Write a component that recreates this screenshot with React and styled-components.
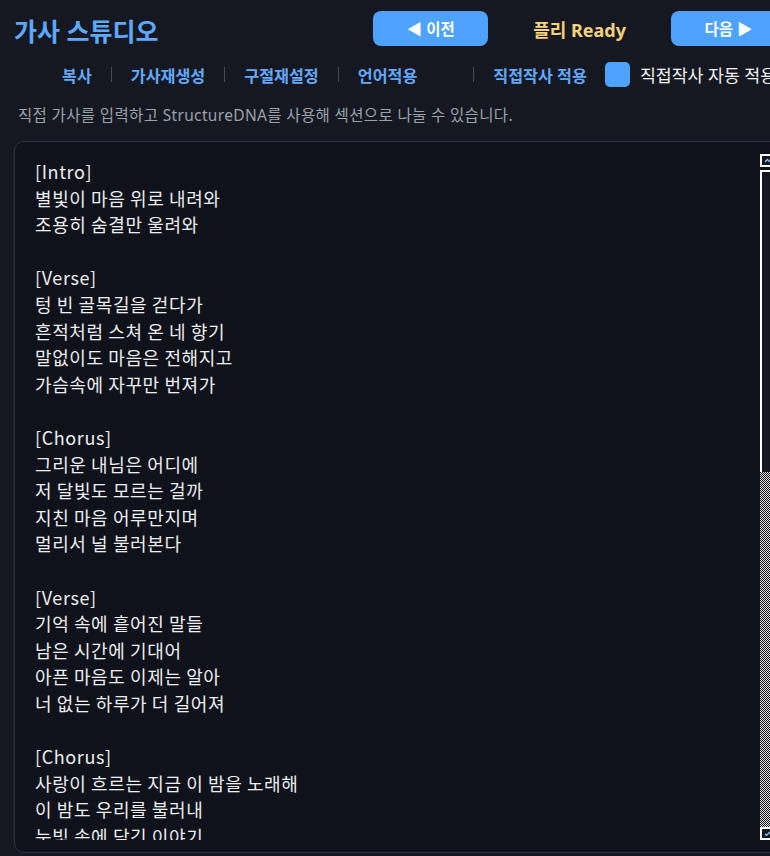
import React from "react";
import styled, { createGlobalStyle } from "styled-components";

const Global = createGlobalStyle`
  html, body { margin: 0; padding: 0; overflow: hidden; background: #151820; }
  * { box-sizing: border-box; }
  body { font-family: "Noto Sans", "Noto Sans CJK KR", sans-serif; }
`;

const Page = styled.div`
  width: 800px;
  height: 856px;
  padding: 11px 14px 3px 14px;
  display: flex;
  flex-direction: column;
  background: #151820;
  color: #e8eaed;
  font-family: "Noto Sans", "Noto Sans CJK KR", sans-serif;
`;

const Header = styled.header`
  display: flex;
  align-items: center;
  justify-content: space-between;
  height: 35px;
`;

const Title = styled.h1`
  margin: 0;
  font-size: 25px;
  font-weight: 700;
  color: #5ea8ff;
  padding-top: 3px;
`;

const Nav = styled.div`
  display: flex;
  align-items: center;
  gap: 45px;
`;

const NavButton = styled.button`
  width: 115px;
  height: 35px;
  border: none;
  border-radius: 8px;
  background: #4da3ff;
  color: #ffffff;
  font-family: inherit;
  font-size: 15.5px;
  font-weight: 700;
  display: flex;
  align-items: center;
  justify-content: center;
  gap: 7px;
  cursor: pointer;
`;

const Status = styled.span`
  font-size: 18px;
  font-weight: 700;
  color: #f5d27c;
`;

const Toolbar = styled.div`
  display: flex;
  align-items: center;
  height: 25px;
  margin-top: 16px;
  padding-left: 48px;
  white-space: nowrap;
`;

const ToolLink = styled.button`
  background: none;
  border: none;
  padding: 0;
  font-family: inherit;
  font-size: 16.2px;
  font-weight: 700;
  color: #62a9ff;
  cursor: pointer;
`;

const Sep = styled.span`
  width: 1px;
  height: 15px;
  background: #444b58;
  margin-right: 19px;
  margin-left: ${(p) => (p.$wide ? "56px" : "19px")};
`;

const Check = styled.span`
  width: 25px;
  height: 25px;
  border-radius: 5px;
  background: #4da3ff;
  margin-left: 18px;
  flex: none;
`;

const CheckLabel = styled.span`
  margin-left: 10px;
  font-size: 17.3px;
  color: #f2f3f5;
`;

const Desc = styled.p`
  margin: 18px 0 0 4px;
  font-size: 15.5px;
  letter-spacing: 0.35px;
  line-height: 20px;
  color: #9aa1ad;
  white-space: nowrap;
`;

const EditorBox = styled.div`
  position: relative;
  flex: 1;
  margin-top: 16px;
  border: 1px solid #2f333d;
  border-radius: 10px;
  background: #0f121a;
  padding: 12px;
  display: flex;
  min-height: 0;
`;

const Lyrics = styled.textarea`
  flex: 1;
  border: none;
  outline: none;
  resize: none;
  background: transparent;
  color: #eceef1;
  font-family: "Noto Sans CJK KR", "Noto Sans", sans-serif;
  font-size: 18px;
  letter-spacing: 0.6px;
  line-height: 26.6px;
  padding: 4px 21px 4px 8px;
  margin: 0;
  overflow: hidden;
`;

/* drawn native-looking scrollbar that lies over the editor's right edge */
const ScrollRail = styled.div`
  position: absolute;
  top: 12px;
  bottom: 12px;
  right: 12px;
  width: 13px;
  display: flex;
  flex-direction: column;
  pointer-events: none;
`;

const ScrollButton = styled.div`
  height: 13px;
  flex: none;
  background: #14171e;
  border: 2px solid #ffffff;
  border-right: none;
  display: flex;
  align-items: center;
  justify-content: center;
  margin: ${(p) => (p.$down ? "0 0 0 0" : "0 0 3px 0")};
`;

const Track = styled.div`
  flex: 1;
  display: flex;
  flex-direction: column;
  background: repeating-conic-gradient(#e6e6e6 0% 25%, #101218 0% 50%) 0 0 / 2px 2px;
`;

const Thumb = styled.div`
  height: 46%;
  background: #14171e;
  border: 2px solid #ffffff;
  border-right: none;
  border-bottom: none;
`;

const lyrics = `[Intro]
별빛이 마음 위로 내려와
조용히 숨결만 울려와

[Verse]
텅 빈 골목길을 걷다가
흔적처럼 스쳐 온 네 향기
말없이도 마음은 전해지고
가슴속에 자꾸만 번져가

[Chorus]
그리운 내님은 어디에
저 달빛도 모르는 걸까
지친 마음 어루만지며
멀리서 널 불러본다

[Verse]
기억 속에 흩어진 말들
남은 시간에 기대어
아픈 마음도 이제는 알아
너 없는 하루가 더 길어져

[Chorus]
사랑이 흐르는 지금 이 밤을 노래해
이 밤도 우리를 불러내
눈빛 속에 담긴 이야기
끝없이 이어질 노래

[Bridge]
바람이 불어와 너를 데려가도
내 마음은 여기 머물러
흐려진 기억 속 너의 얼굴
다시 한 번 불러보네

[Chorus]
그리운 내님은 어디에
저 달빛도 모르는 걸까
지친 마음 어루만지며
멀리서 널 불러본다

[Outro]
별빛이 마음 위로 내려와
조용히 숨결만 울려와
오늘 밤도 너를 그리며
노래는 끝나지 않아`;

export default function App() {
  return (
    <>
      <Global />
      <Page>
        <Header>
          <Title>가사 스튜디오</Title>
          <Nav>
            <NavButton>◀ 이전</NavButton>
            <Status>플리 Ready</Status>
            <NavButton>다음 ▶</NavButton>
          </Nav>
        </Header>
        <Toolbar>
          <ToolLink>복사</ToolLink>
          <Sep />
          <ToolLink>가사재생성</ToolLink>
          <Sep />
          <ToolLink>구절재설정</ToolLink>
          <Sep />
          <ToolLink>언어적용</ToolLink>
          <Sep $wide />
          <ToolLink>직접작사 적용</ToolLink>
          <Check />
          <CheckLabel>직접작사 자동 적용</CheckLabel>
        </Toolbar>
        <Desc>직접 가사를 입력하고 StructureDNA를 사용해 섹션으로 나눌 수 있습니다.</Desc>
        <EditorBox>
          <Lyrics defaultValue={lyrics} spellCheck={false} />
          <ScrollRail aria-hidden="true">
            <ScrollButton>
              <svg width="7" height="5" viewBox="0 0 7 5">
                <path d="M1 4 L3.5 1.5 L6 4" stroke="#8cc4ff" strokeWidth="1.4" fill="none" />
              </svg>
            </ScrollButton>
            <Track>
              <Thumb />
            </Track>
            <ScrollButton $down>
              <svg width="7" height="5" viewBox="0 0 7 5">
                <path d="M1 3 L2.5 4.3 L6 1" stroke="#8cc4ff" strokeWidth="1.4" fill="none" />
              </svg>
            </ScrollButton>
          </ScrollRail>
        </EditorBox>
      </Page>
    </>
  );
}
